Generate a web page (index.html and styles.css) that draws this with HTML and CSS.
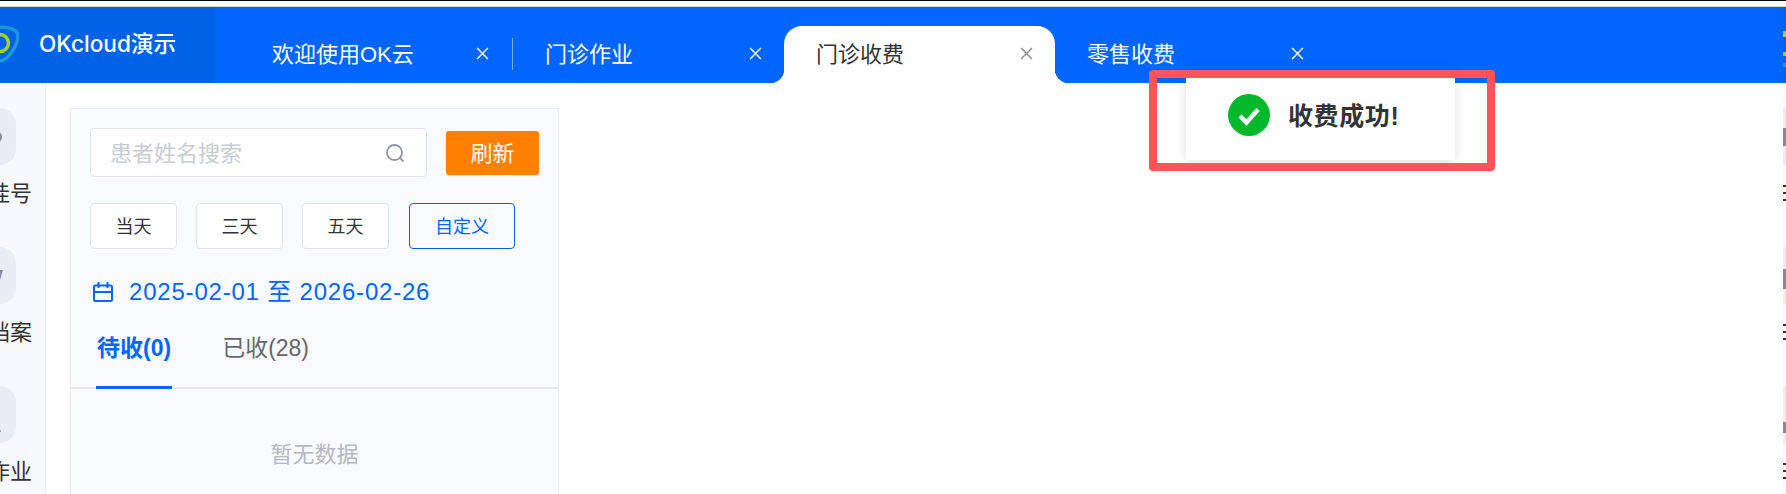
FILE: index.html
```html
<!DOCTYPE html>
<html lang="zh-CN">
<head>
  <meta charset="UTF-8">
  <meta name="viewport" content="width=device-width, initial-scale=1.0">
  <title>门诊收费</title>
  <link rel="stylesheet" href="styles.css">
</head>
<body>
  <div class="top-strip"></div>

  <header class="header">
    <div class="brand">
      <svg class="brand-logo" width="38" height="38" viewBox="0 0 38 38" fill="none">
        <path d="M19 2 C27 2 37 4 37 11 C37 21 26 36 19 36 C12 36 1 21 1 11 C1 4 11 2 19 2 Z" stroke="#1a9ad6" stroke-width="3.5"/>
        <circle cx="19" cy="18" r="8.5" stroke="#a4d21a" stroke-width="3.5"/>
      </svg>
      <span class="brand-name">OKcloud演示</span>
    </div>
    <nav class="tabs">
      <div class="tab"><span>欢迎使用OK云</span>
        <svg class="tab-close" viewBox="0 0 12 12"><path d="M1 1 L11 11 M11 1 L1 11"/></svg>
      </div>
      <i class="tab-sep"></i>
      <div class="tab"><span>门诊作业</span>
        <svg class="tab-close" viewBox="0 0 12 12"><path d="M1 1 L11 11 M11 1 L1 11"/></svg>
      </div>
      <div class="tab active"><span>门诊收费</span>
        <svg class="tab-close" viewBox="0 0 12 12"><path d="M1 1 L11 11 M11 1 L1 11"/></svg>
      </div>
      <div class="tab"><span>零售收费</span>
        <svg class="tab-close" viewBox="0 0 12 12"><path d="M1 1 L11 11 M11 1 L1 11"/></svg>
      </div>
    </nav>
    <div class="edge-logo">
      <b class="mark-a"></b><b class="mark-b"></b><b class="mark-c"></b>
    </div>
  </header>

  <div class="main">
    <aside class="sidebar">
      <div class="side-item">
        <div class="side-icon">
          <svg width="34" height="34" viewBox="0 0 34 34"><circle cx="26" cy="17" r="6" fill="#868a9e"/></svg>
        </div>
        <span>门诊挂号</span>
      </div>
      <div class="side-item">
        <div class="side-icon">
          <svg width="34" height="34" viewBox="0 0 34 34"><path d="M0 11 H33 L29 24 H0 Z" fill="#868a9e"/></svg>
        </div>
        <span>患者档案</span>
      </div>
      <div class="side-item">
        <div class="side-icon">
          <svg width="34" height="34" viewBox="0 0 34 34"><path d="M0 22 H27 L31 34 H0 Z" fill="#868a9e"/></svg>
        </div>
        <span>门诊作业</span>
      </div>
    </aside>

    <section class="panel">
      <div class="search-row">
        <div class="search-box">
          <span class="search-text">患者姓名搜索</span>
          <svg width="20" height="20" viewBox="0 0 20 20" fill="none" stroke="#93969e" stroke-width="1.8">
            <circle cx="9.5" cy="9.5" r="7.5"/><path d="M15 15 L18.5 18.5"/>
          </svg>
        </div>
        <button class="refresh">刷新</button>
      </div>

      <div class="range-row">
        <button class="range">当天</button>
        <button class="range">三天</button>
        <button class="range">五天</button>
        <button class="range range-on">自定义</button>
      </div>

      <div class="date-row">
        <svg width="20" height="20" viewBox="0 0 20 20" fill="none" stroke="#0066ff" stroke-width="2">
          <rect x="1" y="3.5" width="18" height="15.5" rx="1.5"/><path d="M1 10 H19 M5.5 0 V6 M14.5 0 V6"/>
        </svg>
        <span class="date-text">2025-02-01 至 2026-02-26</span>
      </div>

      <div class="status-tabs">
        <div class="status on">待收(0)</div>
        <div class="status">已收(28)</div>
      </div>

      <div class="empty">暂无数据</div>
    </section>

    <div class="edge-side">
      <div class="edge-item"><i class="edge-icon-a"></i><u></u></div>
      <div class="edge-item"><i class="edge-icon-b"></i><u></u></div>
      <div class="edge-item"><i class="edge-icon-c"></i><u></u></div>
    </div>
  </div>

  <!-- 提示 -->
  <div class="toast">
    <svg width="42" height="42" viewBox="0 0 42 42">
      <circle cx="21" cy="21" r="21" fill="#04b82c"/>
      <path d="M12 22 L18.5 28.5 L30 15.5" fill="none" stroke="#fff" stroke-width="4.5"/>
    </svg>
    <span class="toast-text">收费成功!</span>
  </div>
  <div class="mark-box"></div>
</body>
</html>
```

FILE: styles.css
```css
* {
  box-sizing: border-box;
}
html, body {
  height: 100%;
}
body {
  margin: 0;
  height: 494px;
  overflow: hidden;
  position: relative;
  background: #fff;
  font-family: "Liberation Sans", "Noto Sans CJK SC", sans-serif;
  color: #333;
  display: flex;
  flex-direction: column;
}
.top-strip {
  height: 7px;
  flex: none;
  background: #fff;
  border-top: 1px solid #000;
  border-bottom: 1px solid #d4d4d4;
}
.header {
  height: 76px;
  flex: none;
  display: flex;
  background: #0066ff;
}
.brand {
  width: 215px;
  flex: none;
  background: #0062e6;
  display: flex;
  align-items: center;
  color: #fff;
  overflow: hidden;
}
.brand-logo {
  flex: none;
  margin: -2px 20px 0 -19px;
}
.brand-name {
  font-family: Inter, "Noto Sans CJK SC", sans-serif;
  font-size: 22.6px;
  font-weight: 500;
  margin-top: -5px;
}
.tabs {
  flex: 1;
  display: flex;
  align-items: flex-end;
  padding-left: 25px;
}
.tab {
  width: 271px;
  height: 57px;
  padding: 0 22px 2px 32px;
  display: flex;
  align-items: center;
  justify-content: space-between;
  font-size: 22px;
  color: #fff;
  position: relative;
}
.tab span {
  margin-top: -4px;
}
.tab-close {
  width: 13px;
  height: 13px;
  stroke: #fff;
  stroke-width: 1.3;
  fill: none;
}
.tab-sep {
  width: 1px;
  height: 32px;
  margin: 0 0 13px 1px;
  background: rgba(255,255,255,0.45);
}
.tab.active {
  background: #fff;
  color: #333;
  border-radius: 18px 18px 0 0;
}
.tab.active .tab-close {
  stroke: #8a8a8a;
}
.tab.active::before,
.tab.active::after {
  content: "";
  position: absolute;
  bottom: 0;
  width: 14px;
  height: 14px;
}
.tab.active::before {
  left: -14px;
  background: radial-gradient(circle at 0 0, #0066ff 14px, #fff 14.5px);
}
.tab.active::after {
  right: -14px;
  background: radial-gradient(circle at 100% 0, #0066ff 14px, #fff 14.5px);
}
.edge-logo {
  width: 3px;
  flex: none;
  background: #0062e6;
  position: relative;
}
.edge-logo b {
  position: absolute;
  left: 0;
  width: 3px;
}
.mark-a { top: 24px; height: 6px; background: #a4d21a; }
.mark-b { top: 45px; height: 4px; background: #a4d21a; }
.mark-c { top: 56px; height: 4px; background: #1a9ad6; }

.main {
  flex: 1;
  display: flex;
  min-height: 0;
  overflow: hidden;
}
.sidebar {
  width: 46px;
  flex: none;
  background: #f8f9fe;
  border-right: 1px solid #eceef5;
  padding-top: 25px;
  overflow: hidden;
}
.side-item {
  width: 88px;
  margin-left: -57px;
  height: 139px;
  display: flex;
  flex-direction: column;
  align-items: center;
  flex: none;
}
.side-item span {
  font-size: 22px;
  white-space: nowrap;
  margin: 14px 0 0 2px;
  line-height: 30px;
  color: #333;
}
.side-icon {
  width: 57px;
  height: 57px;
  border-radius: 16px;
  background: #e9ecf4;
  display: flex;
  align-items: center;
  justify-content: center;
}
.panel {
  width: 489px;
  flex: none;
  margin: 25px 0 0 24px;
  background: #f9faff;
  border: 1px solid #e9ecf3;
  border-bottom: none;
}
.search-row {
  display: flex;
  align-items: center;
  gap: 19px;
  margin: 19px 0 0 19px;
}
.search-box {
  width: 337px;
  height: 49px;
  background: #fff;
  border: 1px solid #dfe3ec;
  border-radius: 4px;
  padding: 0 21px 0 19px;
  display: flex;
  align-items: center;
  justify-content: space-between;
  font-size: 22px;
  color: #c8ccd4;
}
.search-text {
  margin-top: -4px;
}
button {
  font-family: inherit;
  cursor: pointer;
}
.refresh {
  width: 93px;
  height: 44px;
  border: none;
  border-radius: 3px;
  background: #ff8000;
  color: #fff;
  font-size: 22px;
  padding: 0 0 4px;
}
.range-row {
  display: flex;
  gap: 19px;
  margin: 26px 0 0 19px;
}
.range {
  width: 87px;
  height: 46px;
  padding: 0 0 2px;
  background: #fff;
  border: 1px solid #dfe3ec;
  border-radius: 4px;
  font-size: 18px;
  color: #333;
}
.range-on {
  width: 106px;
  margin-left: 1px;
  background: #f9faff;
  border-color: #0d5fd8;
  color: #0066ff;
}
.date-row {
  display: flex;
  align-items: center;
  gap: 16px;
  height: 30px;
  margin: 28px 0 0 22px;
  font-size: 24px;
  letter-spacing: 0.8px;
  color: #0066ff;
}
.date-text {
  margin-top: -6px;
}
.status-tabs {
  display: flex;
  gap: 49px;
  height: 65px;
  margin-top: 17px;
  padding-left: 25px;
  border-bottom: 2px solid #e6e8ef;
}
.status {
  height: 65px;
  padding: 0 1px;
  line-height: 48px;
  font-size: 23px;
  color: #666;
  flex: none;
}
.status.on {
  font-weight: 700;
  color: #0066ff;
  border-bottom: 3px solid #0f62fe;
}
.empty {
  margin-top: 50px;
  line-height: 32px;
  text-align: center;
  font-size: 22px;
  color: #b4b8c0;
}
.edge-side {
  position: absolute;
  top: 83px;
  right: 0;
  bottom: 0;
  width: 3px;
  background: #f8f9fe;
  padding-top: 25px;
  overflow: hidden;
}
.edge-item {
  height: 139px;
}
.edge-item i {
  display: block;
  height: 57px;
  background: #e9ecf4;
}
.edge-icon-a { background: linear-gradient(#e9ecf4 20px, #868a9e 20px, #868a9e 38px, #e9ecf4 38px) !important; }
.edge-icon-b { background: linear-gradient(#e9ecf4 22px, #868a9e 22px, #868a9e 42px, #e9ecf4 42px) !important; }
.edge-icon-c { background: linear-gradient(#e9ecf4 36px, #868a9e 36px, #868a9e 47px, #e9ecf4 47px) !important; }
.edge-item u {
  display: block;
  height: 18px;
  margin-top: 20px;
  background: repeating-linear-gradient(#333 0, #333 2px, transparent 2px, transparent 7px);
}
.toast {
  position: absolute;
  left: 1186px;
  top: 70px;
  width: 269px;
  height: 90px;
  background: #fff;
  border-radius: 3px;
  box-shadow: 0 2px 12px rgba(0,0,0,0.12);
  display: flex;
  align-items: center;
  padding-left: 42px;
  gap: 18px;
  font-size: 25px;
  font-weight: 700;
  letter-spacing: 0.6px;
  color: #333;
}
.toast-text {
  margin-top: -3px;
}
.mark-box {
  position: absolute;
  left: 1149px;
  top: 70px;
  width: 346px;
  height: 101px;
  border: 8px solid #ff5558;
  border-radius: 4px;
}
```
